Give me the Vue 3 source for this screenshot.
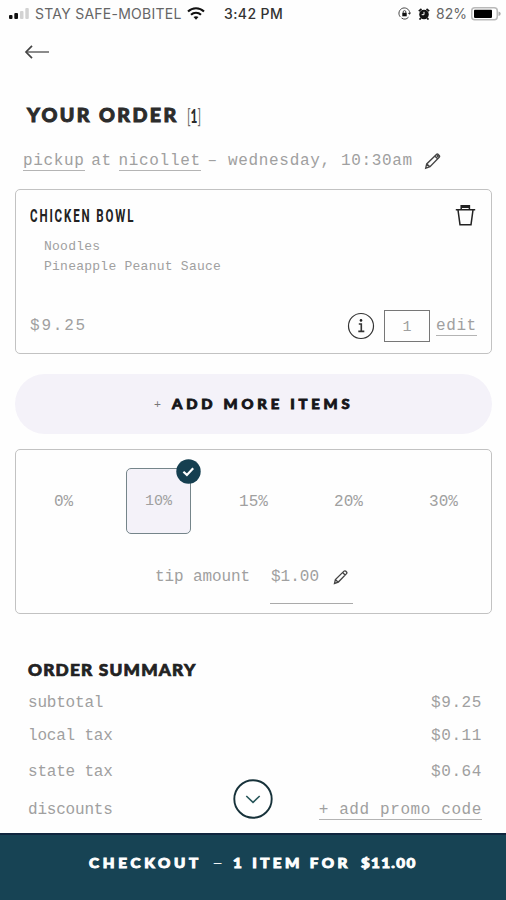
<script setup>
const tips = ['0%', '10%', '15%', '20%', '30%']
const selected = '10%'
const summary = [
  { label: 'subtotal', value: '$9.25', cls: 'r1' },
  { label: 'local tax', value: '$0.11', cls: 'r2' },
  { label: 'state tax', value: '$0.64', cls: 'r3' },
]
</script>

<template>
  <div class="screen">
    <header class="status">
      <svg class="signal" width="20" height="12" viewBox="0 0 20 12">
        <rect x="0" y="7" width="3.5" height="4" rx="1" fill="#111" />
        <rect x="5.3" y="5" width="3.7" height="6" rx="1" fill="#111" />
        <rect x="11" y="3" width="3.5" height="8" rx="1" fill="#d2d2d2" />
        <rect x="16.3" y="0" width="3.5" height="11" rx="1" fill="#d2d2d2" />
      </svg>
      <span class="carrier">STAY SAFE-MOBITEL</span>
      <svg class="wifi" width="18" height="13" viewBox="0 0 18 13" fill="none" stroke="#111" stroke-width="2.1">
        <path d="M1 4.6C5.5.2 12.5.2 17 4.6" />
        <path d="M4 7.7c2.8-2.7 7.2-2.7 10 0" />
        <path d="M6.5 10.1c1.4-1.3 3.6-1.3 5 0L9 12.7z" fill="#111" stroke="none" />
      </svg>
      <span class="clock">3:42 PM</span>
      <svg class="lock" width="13" height="13" viewBox="0 0 13 13" fill="none" stroke="#444">
        <path d="M2.2 9.8A5.4 5.4 0 1 1 11.7 7M10.5 10.2A5.4 5.4 0 0 1 3.5 11" />
        <path d="M9.8 6l1.9 1.8L13 5.6z" fill="#333" stroke="none" />
        <rect x="4.3" y="5.8" width="4.4" height="3.5" fill="#111" stroke="none" />
        <path d="M5.2 6V4.9a1.3 1.3 0 0 1 2.6 0V6" />
      </svg>
      <svg class="alarm" width="12" height="12" viewBox="0 0 12 12">
        <circle cx="6" cy="6.5" r="4.8" fill="#111" />
        <path d="M.8 3.2L3.5 1M11.2 3.2L8.5 1M2.8 10.2l-1.3 1.3M9.2 10.2l1.3 1.3" stroke="#111" stroke-width="1.7" />
        <path d="M6 3.8v2.9H3.7" fill="none" stroke="#fff" />
      </svg>
      <span class="percent">82%</span>
      <svg class="battery" width="30" height="14" viewBox="0 0 30 14">
        <rect x=".75" y=".75" width="25.5" height="12" rx="3" fill="#fff" stroke="#b9b9b9" stroke-width="1.5" />
        <rect x="3" y="2.7" width="18" height="8.2" rx=".8" fill="#000" />
        <path d="M27.5 4.5q2.2.5 2.2 2.2t-2.2 2.3z" fill="#aaa" />
      </svg>
    </header>

    <nav class="nav">
      <svg width="26" height="16" viewBox="0 0 26 16" fill="none" stroke="#444" stroke-width="1.7">
        <path d="M25 8H2" stroke="#777" />
        <path d="M8 1.8L2 8l6 6.2" />
      </svg>
    </nav>

    <h1 class="title">
      <span class="wide">YOUR ORDER</span>
      <span class="count"><i>[</i>1<i>]</i></span>
    </h1>

    <p class="pickup mono">
      <span class="place"><u>pickup</u> at <u>nicollet</u> –</span>
      <span class="when">wednesday, 10:30am</span>
      <svg class="pencil" width="18" height="18" viewBox="0 0 18 18" fill="none" stroke="#444" stroke-width="1.35">
        <path d="M1.7 16.2l1-4.3L12.4 2.4q.8-.7 1.8 0l1 1q.9.9 0 1.8L6 14.7zM10.8 4l2.8 2.7M2.8 12l2.8 2.6" />
        <path d="M13 3.2l1.6 1.6" stroke-width="2.2" />
      </svg>
    </p>

    <section class="card item">
      <div class="item-head">
        <h2><span>CHICKEN BOWL</span></h2>
        <svg width="21" height="22" viewBox="0 0 21 22" fill="none" stroke="#222" stroke-width="1.5">
          <path d="M.8 5.8h19.4M6.2 5.3V1.7h8.2v3.6M6.4 3.2h8M3 6l2 14.7h11L18 6" />
        </svg>
      </div>
      <ul class="options mono">
        <li>Noodles</li>
        <li>Pineapple Peanut Sauce</li>
      </ul>
      <div class="item-foot mono">
        <span class="price">$9.25</span>
        <svg class="info" width="28" height="28" viewBox="0 0 28 28" fill="none" stroke="#333">
          <circle cx="14" cy="14" r="12.5" stroke-width="1.2" />
          <path d="M11.8 12h2.5v7.2M11.3 19.4h6" stroke-width="1.6" />
          <circle cx="14" cy="8.4" r="1.3" fill="#222" stroke="none" />
        </svg>
        <span class="qty">1</span>
        <u class="edit">edit</u>
      </div>
    </section>

    <button class="add"><span class="plus">+</span><span class="add-text">ADD MORE ITEMS</span></button>

    <section class="card tips mono">
      <div class="tip-row">
        <div v-for="tip in tips" :key="tip" class="tip" :class="{ active: tip === selected }">
          <span>{{ tip }}</span>
          <svg v-if="tip === selected" class="badge" width="25" height="25" viewBox="0 0 25 25">
            <circle cx="12.5" cy="12.5" r="12.2" fill="#153f50" />
            <path d="M7.4 12.8l3.5 3.1 6.3-6.6" fill="none" stroke="#fff" stroke-width="2.2" />
          </svg>
        </div>
      </div>
      <div class="amount">
        <span class="amount-label">tip amount</span>
        <span class="amount-field">
          <span>$1.00</span>
          <svg width="16" height="16" viewBox="0 0 18 18" fill="none" stroke="#444" stroke-width="1.5">
            <path d="M1.7 16.2l1-4.3L12.4 2.4q.8-.7 1.8 0l1 1q.9.9 0 1.8L6 14.7zM10.8 4l2.8 2.7M2.8 12l2.8 2.6" />
          </svg>
        </span>
      </div>
    </section>

    <section class="summary">
      <h2>ORDER SUMMARY</h2>
      <dl class="mono">
        <div v-for="row in summary" :key="row.label" :class="row.cls">
          <dt>{{ row.label }}</dt>
          <dd>{{ row.value }}</dd>
        </div>
        <div class="r4">
          <dt>discounts</dt>
          <dd><u>+ add promo code</u></dd>
        </div>
      </dl>
    </section>

    <svg class="more" width="40" height="40" viewBox="0 0 40 40" fill="none">
      <circle cx="20" cy="20" r="18.7" fill="#fff" stroke="#17323a" stroke-width="1.9" />
      <path d="M13.3 17l6.7 6.4 6.7-6.4" stroke="#28565a" stroke-width="1.6" />
    </svg>

    <footer class="checkout"><span class="verb">CHECKOUT</span><b class="dash">–</b><span class="what">1 ITEM FOR</span><span class="total">$11.00</span></footer>
  </div>
</template>

<style>
body {
  margin: 0;
  background: #fefefe;
}
</style>

<style scoped>
* {
  box-sizing: border-box;
}
h1, h2, p, ul, dl, dd {
  margin: 0;
  padding: 0;
}
svg {
  display: block;
  flex: none;
}
.screen {
  position: relative;
  display: flex;
  flex-direction: column;
  width: 506px;
  height: 900px;
  overflow: hidden;
  background: #fefefe;
  font-family: Lato, "Liberation Sans", sans-serif;
}
.mono {
  font-family: "Liberation Mono", monospace;
  color: #a0a0a0;
}
u {
  text-decoration: none;
  border-bottom: 1.5px solid #b4b4b4;
}

.status {
  display: flex;
  align-items: center;
  height: 27px;
  padding-left: 9px;
  font-family: Inter, sans-serif;
  font-size: 14px;
  color: #666;
  white-space: nowrap;
}
.carrier {
  width: 146px;
  margin-left: 6px;
  letter-spacing: 0.25px;
}
.wifi {
  margin-left: 6px;
}
.clock {
  width: 60px;
  margin-left: 19px;
  color: #333;
  font-weight: 500;
  letter-spacing: 0.4px;
}
.lock {
  margin-left: 114px;
}
.alarm {
  margin-left: 7px;
}
.percent {
  width: 31px;
  margin-left: 6px;
}
.battery {
  margin-left: 4px;
}

.nav {
  height: 50px;
  padding: 17px 0 0 24px;
}

.title {
  display: flex;
  align-items: center;
  height: 74px;
  padding-top: 2px;
  padding-left: 27px;
  font-weight: 900;
  color: #2c2c2c;
  white-space: nowrap;
}
.wide {
  width: 152px;
  letter-spacing: 2.2px;
  font-size: 18px;
  transform: scaleX(1.09);
  transform-origin: left;
  -webkit-text-stroke: 0.9px #2c2c2c;
}
.count {
  margin-left: 8px;
  font-size: 19px;
  transform: scaleX(0.62);
  transform-origin: left;
}
.count i {
  font-style: normal;
  font-weight: 400;
  color: #666;
}

.pickup {
  display: flex;
  align-items: center;
  height: 38px;
  padding-left: 23px;
  padding-bottom: 18px;
  font-size: 16px;
  letter-spacing: 0.67px;
  white-space: nowrap;
}
.place {
  width: 205px;
  word-spacing: -3.6px;
}
.when {
  width: 186px;
}
.pencil {
  margin-left: 10px;
}

.card {
  flex: none;
  margin: 0 14px 0 15px;
  border: 1.5px solid #c2c2c2;
  border-radius: 5px;
}
.item {
  height: 165px;
  padding: 15px 14px 0;
}
.item-head {
  display: flex;
  justify-content: space-between;
  height: 24px;
  padding-right: 1px;
}
.item-head h2 {
  width: 110px;
  font: 700 18px/22px Roboto, sans-serif;
  letter-spacing: 2.9px;
  color: #222;
  white-space: nowrap;
}
.item-head h2 span {
  display: inline-block;
  transform: scaleX(0.64);
  transform-origin: left;
}
.item-head svg {
  margin-top: -1px;
}
.options {
  margin: 7.5px 0 0 14px;
  list-style: none;
  font-size: 13px;
  line-height: 20.5px;
  letter-spacing: 0.25px;
}
.item-foot {
  display: flex;
  align-items: center;
  height: 34px;
  margin-top: 31px;
  font-size: 16px;
}
.price {
  flex: 1;
  letter-spacing: 1.8px;
}
.qty {
  width: 46px;
  height: 32px;
  margin: 0 6px 0 9px;
  border: 1.5px solid #777;
  font-size: 15px;
  line-height: 33px;
  text-align: center;
}
.edit {
  width: 41px;
  margin-top: 2px;
  line-height: 17px;
  letter-spacing: 0.6px;
}

.add {
  display: flex;
  flex: none;
  align-items: center;
  height: 60px;
  margin: 20px 14px 15px 15px;
  padding: 0 0 1px 139px;
  border: 0;
  border-radius: 30px;
  background: #f4f2f9;
  font-family: Lato, sans-serif;
  white-space: nowrap;
}
.plus {
  width: 18px;
  color: #777;
  font-size: 12px;
  text-align: left;
}
.add-text {
  font-size: 13.2px;
  font-weight: 900;
  letter-spacing: 3.4px;
  color: #151518;
  transform: scaleX(1.12);
  transform-origin: left;
  -webkit-text-stroke: 0.8px #151518;
}

.tips {
  height: 165px;
  padding-top: 18px;
}
.tip-row {
  display: grid;
  grid-template-columns: repeat(5, 1fr);
  height: 66px;
  font-size: 16px;
}
.tip {
  position: relative;
  display: flex;
  align-items: center;
  justify-content: center;
  width: 66px;
  margin: 0 auto;
  padding-top: 2px;
}
.tip.active {
  width: 65px;
  padding-top: 0;
  border: 1.5px solid #75858a;
  border-radius: 5px;
  background: #f4f2f9;
  font-size: 15px;
}
.badge {
  position: absolute;
  top: -10px;
  right: -11px;
}
.amount {
  display: flex;
  height: 44px;
  margin: 26px 0 0 139px;
  font-size: 16px;
}
.amount-label {
  width: 115px;
  padding-top: 7px;
  line-height: 20px;
  letter-spacing: -0.1px;
}
.amount-field {
  display: flex;
  align-items: center;
  justify-content: space-between;
  width: 83px;
  padding: 0 4px 10px 1px;
  border-bottom: 1.5px solid #aaa;
}

.summary {
  margin: 45px 24px 0 28px;
}
.summary h2 {
  font-size: 16px;
  line-height: 22px;
  font-weight: 900;
  letter-spacing: 1.1px;
  color: #222;
  white-space: nowrap;
  transform: scaleX(1.08);
  transform-origin: left;
  -webkit-text-stroke: 0.7px #222;
}
dl > div {
  display: flex;
  justify-content: space-between;
  align-items: center;
  height: 20px;
  font-size: 16px;
  line-height: 18px;
}
dd {
  letter-spacing: 0.6px;
}
dt {
  letter-spacing: -0.2px;
}
.r1 {
  margin-top: 12px;
}
.r2 {
  margin-top: 13px;
}
.r3 {
  margin-top: 16px;
}
.r4 {
  margin-top: 18px;
}

.more {
  position: absolute;
  left: 233px;
  top: 779px;
}
.checkout {
  position: absolute;
  left: 0;
  right: 0;
  bottom: 0;
  display: flex;
  height: 67px;
  padding: 18px 0 0 89px;
  border-top: 2px solid #10263e;
  background: #174354;
  color: #fff;
  font-size: 13.8px;
  line-height: 20px;
  font-weight: 900;
  white-space: nowrap;
  -webkit-text-stroke: 0.9px #fff;
}
.checkout span {
  transform: scaleX(1.1);
  transform-origin: left;
}
.verb {
  width: 123px;
  letter-spacing: 3.4px;
}
.dash {
  width: 21px;
  font-weight: 400;
  transform: scaleX(1.4);
  transform-origin: left;
  -webkit-text-stroke: 0;
}
.what {
  width: 128px;
  letter-spacing: 3.1px;
}
.total {
  letter-spacing: 1.2px;
}
</style>
